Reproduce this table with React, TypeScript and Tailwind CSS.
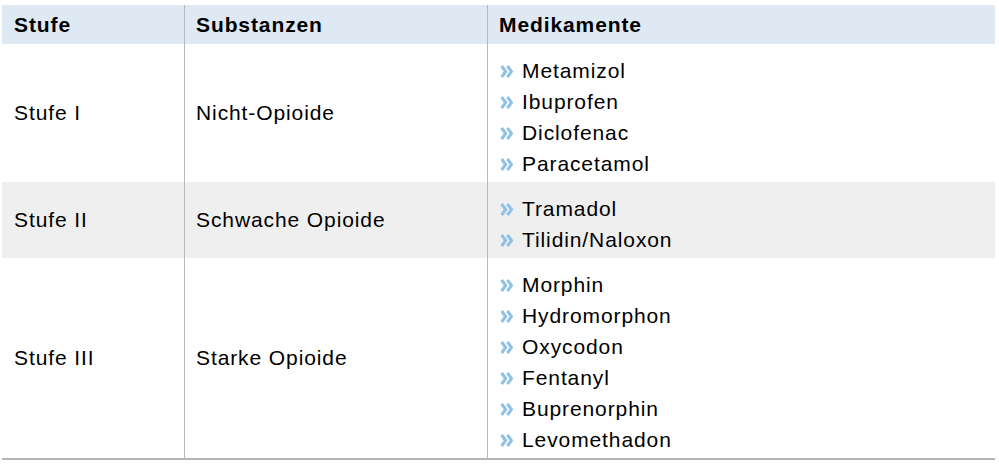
import React from "react";

const Chev = () => (
  <svg width="13" height="13" viewBox="0 0 13 13" className="shrink-0 mt-[2px]">
    <path d="M1.6 1 L5.7 6.5 L1.6 12" fill="none" stroke="#8fc1e4" strokeWidth="3" strokeLinejoin="miter" />
    <path d="M7.4 1 L11.5 6.5 L7.4 12" fill="none" stroke="#8fc1e4" strokeWidth="3" strokeLinejoin="miter" />
  </svg>
);

const rows = [
  { stufe: "Stufe I", sub: "Nicht-Opioide", meds: ["Metamizol", "Ibuprofen", "Diclofenac", "Paracetamol"], bg: "bg-white" },
  { stufe: "Stufe II", sub: "Schwache Opioide", meds: ["Tramadol", "Tilidin/Naloxon"], bg: "bg-[#efefef]" },
  {
    stufe: "Stufe III",
    sub: "Starke Opioide",
    meds: ["Morphin", "Hydromorphon", "Oxycodon", "Fentanyl", "Buprenorphin", "Levomethadon"],
    bg: "bg-white",
  },
];

export default function App() {
  return (
    <div
      className="w-[999px] h-[465px] bg-white pt-[5px] pl-[2px] text-[21px] text-black tracking-[0.9px]"
      style={{ fontFamily: '"Liberation Sans", Arial, sans-serif' }}
    >
      <div className="w-[993px] border-b-2 border-[#b4b4b4]">
        <div className="grid grid-cols-[183px_303px_1fr] h-[39px] bg-[#dfe9f4] font-bold">
          <div className="flex items-center pl-[12px] border-r border-[#b8b8b8]">Stufe</div>
          <div className="flex items-center pl-[11px] border-r border-[#b8b8b8]">Substanzen</div>
          <div className="flex items-center pl-[11px]">Medikamente</div>
        </div>
        {rows.map((r, i) => (
          <div key={i} className={`grid grid-cols-[183px_303px_1fr] ${r.bg}`}>
            <div className="flex items-center pl-[12px] border-r border-[#b8b8b8]">{r.stufe}</div>
            <div className="flex items-center pl-[11px] border-r border-[#b8b8b8]">{r.sub}</div>
            <div className="flex flex-col pt-[11px] pb-[3px] pl-[12px]">
              {r.meds.map((m) => (
                <div key={m} className="flex items-center h-[31px] gap-[9px]">
                  <Chev />
                  <span>{m}</span>
                </div>
              ))}
            </div>
          </div>
        ))}
      </div>
    </div>
  );
}
